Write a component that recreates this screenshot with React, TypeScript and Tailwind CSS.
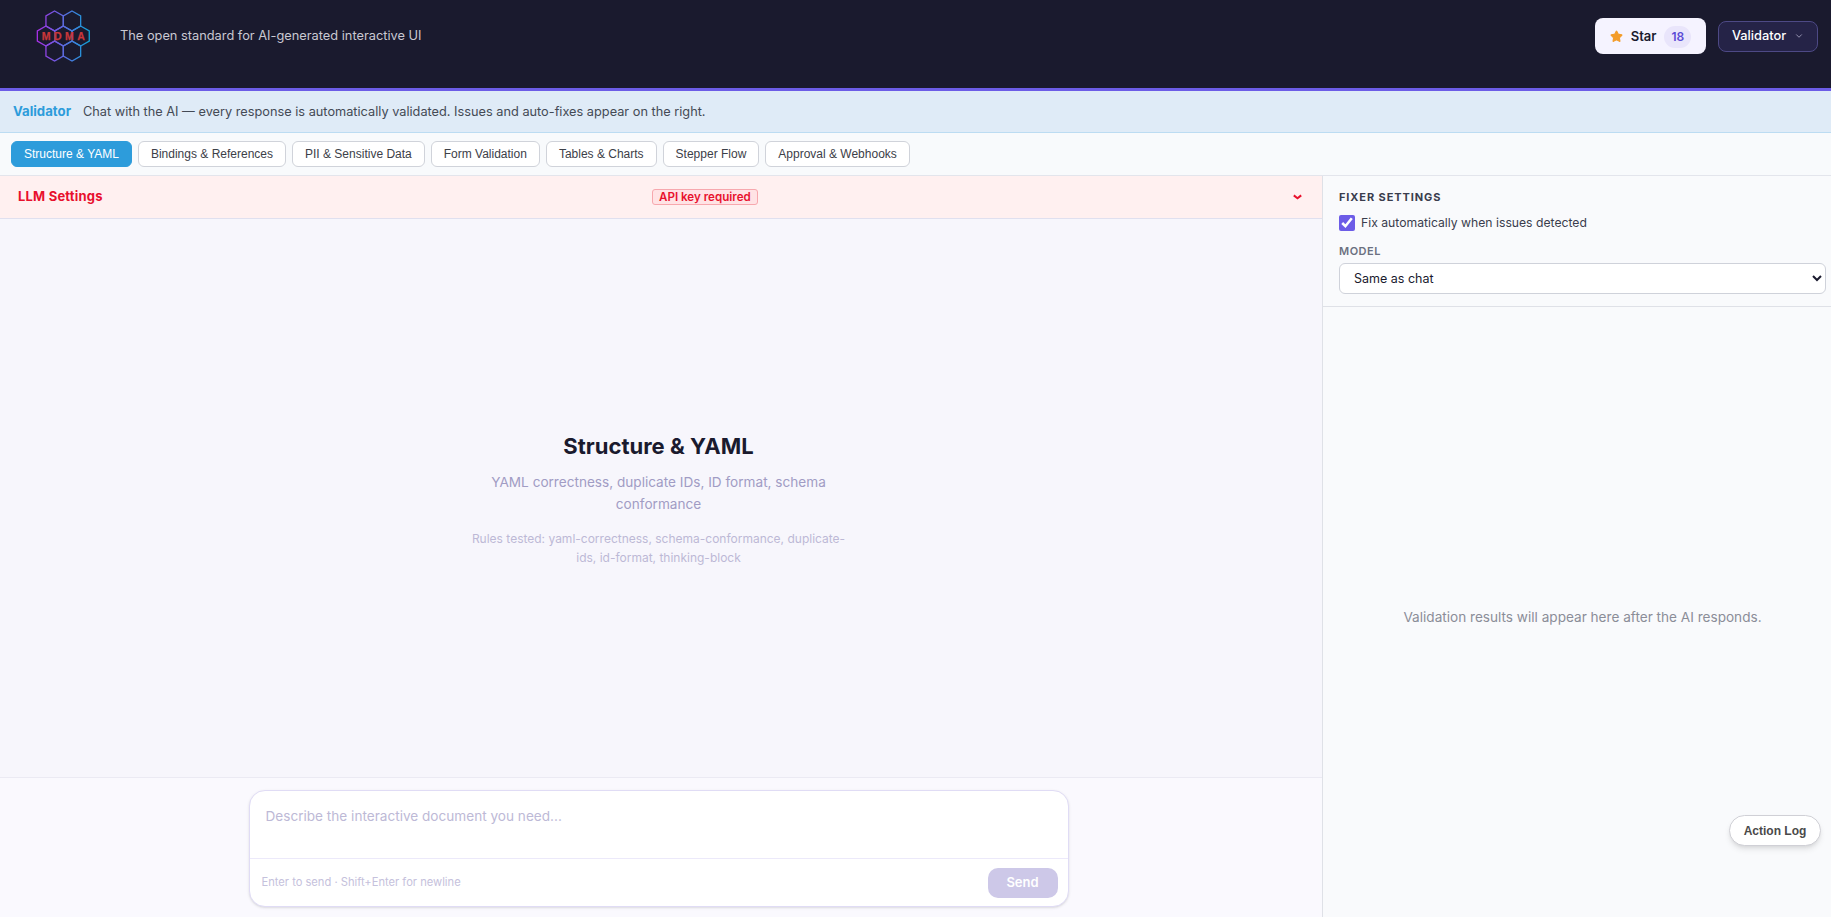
import { Star, ChevronDown } from "lucide-react";

const tabs = [
  "Structure & YAML",
  "Bindings & References",
  "PII & Sensitive Data",
  "Form Validation",
  "Tables & Charts",
  "Stepper Flow",
  "Approval & Webhooks",
];

const hexes = [
  [34.6, 21], [52, 21],
  [26, 36], [43.3, 36], [60.6, 36],
  [34.6, 51], [52, 51],
];

function hexPoints(cx: number, cy: number) {
  const r = 10;
  const w = 8.66;
  return [
    [cx, cy - r], [cx + w, cy - r / 2], [cx + w, cy + r / 2],
    [cx, cy + r], [cx - w, cy + r / 2], [cx - w, cy - r / 2],
  ].map((p) => p.join(",")).join(" ");
}

function Logo() {
  return (
    <svg width="88" height="72" viewBox="0 0 88 72" className="shrink-0">
      <defs>
        <linearGradient id="hexGrad" gradientUnits="userSpaceOnUse" x1="17" y1="36" x2="70" y2="36">
          <stop offset="0" stopColor="#a82fe6" />
          <stop offset="1" stopColor="#0ea5d8" />
        </linearGradient>
      </defs>
      {hexes.map(([x, y], i) => (
        <polygon key={i} points={hexPoints(x, y)} fill="none" stroke="url(#hexGrad)" strokeWidth="1.3" />
      ))}
      <text x="45" y="40" textAnchor="middle" fontSize="10.5" fontWeight="700" fill="#c8373a" stroke="#c8373a" strokeWidth="0.25" letterSpacing="3.5" fontFamily="'Liberation Sans', sans-serif">MDMA</text>
    </svg>
  );
}

export default function App() {
  return (
    <div className="relative h-screen w-full overflow-hidden font-['Inter',sans-serif]">
      <div className="flex h-full w-[1842px] flex-col">
        {/* header */}
        <header className="flex h-[91px] shrink-0 items-center justify-between border-b-[3px] border-[#6c5ce7] bg-[#1a1a2e] pb-4 pl-5 pr-6">
          <div className="flex items-center gap-[12px]">
            <Logo />
            <span className="text-[12.8px] text-[#c9c8d2]">The open standard for AI-generated interactive UI</span>
          </div>
          <div className="flex items-center gap-3">
            <button className="flex h-9 w-[111px] items-center justify-center gap-2 rounded-lg bg-[#f5f3ff] pt-px text-[13px] font-semibold text-[#1a1a2e]">
              <Star size={13} fill="#f39c2b" stroke="#f39c2b" />
              <span>Star</span>
              <span className="rounded-full bg-[#e9e5fb] px-[7px] py-[2px] text-[12px] font-semibold text-[#5b4bd6]">18</span>
            </button>
            <button className="flex h-[31px] w-[100px] items-center justify-center gap-2 rounded-lg border border-[#4d4985] bg-[#252347] text-[12.8px] font-medium text-white">
              Validator
              <ChevronDown size={10} className="text-[#a9a7c4]" />
            </button>
          </div>
        </header>

        {/* banner */}
        <div className="flex h-[42px] shrink-0 items-center gap-[12px] border-b border-[#bcdcf2] bg-[#dfebf7] px-[13px] text-[12.75px]">
          <span className="text-[13.2px] font-bold text-[#2d9cdb]">Validator</span>
          <span className="text-[#444a55]">Chat with the AI — every response is automatically validated. Issues and auto-fixes appear on the right.</span>
        </div>

        {/* tabs */}
        <div className="flex h-[43px] shrink-0 items-center gap-1.5 border-b border-[#e3e5ec] bg-[#f8fafc] px-[11px] font-['Liberation_Sans',sans-serif] text-[12px]">
          {tabs.map((t, i) => (
            <button
              key={t}
              className={
                i === 0
                  ? "h-[26px] rounded-md border border-[#2d9cdb] bg-[#2d9cdb] px-3 text-white"
                  : "h-[26px] rounded-md border border-[#d0d3da] bg-white px-3 text-[#3c4048]"
              }
            >
              {t}
            </button>
          ))}
        </div>

        <div className="flex min-h-0 flex-1">
          {/* left column */}
          <div className="flex w-[1322px] shrink-0 flex-col">
            <div className="flex h-[43px] shrink-0 items-center justify-between border-b border-[#e0e0ef] bg-[#fff0f0] px-[18px]">
              <span className="text-[13px] font-bold tracking-[0.2px] text-[#e8112d]">LLM Settings</span>
              <span className="ml-[14px] rounded-[3px] border border-[#f7a8ae] bg-[#ffe3e5] px-[6px] text-[11.6px] leading-[14px] font-semibold text-[#e8112d]">API key required</span>
              <svg width="9" height="6" viewBox="0 0 9 6" className="mr-[2px] text-[#e8112d]">
                <path d="M0.8 1.4 L4.5 4.3 L8.2 1.4" fill="none" stroke="currentColor" strokeWidth="2" />
              </svg>
            </div>

            <div className="flex flex-1 flex-col items-center justify-center bg-[#f7f6fc] pt-[2px] pr-[5px]">
              <h1 className="text-[22px] leading-[30px] font-bold text-[#1a1a2e]">Structure &amp; YAML</h1>
              <p className="mt-[10px] w-[380px] text-center text-[13.6px] leading-[22px] text-[#a19cc4]">YAML correctness, duplicate IDs, ID format, schema conformance</p>
              <p className="mt-[14px] w-[380px] text-center text-[12px] leading-[19px] text-[#bdb9d6]">Rules tested: yaml-correctness, schema-conformance, duplicate-ids, id-format, thinking-block</p>
            </div>

            <div className="flex h-[140px] shrink-0 justify-center border-t border-[#ebeaf3] bg-[#faf9fe] pt-3 pr-[5px]">
              <div className="flex h-[117px] w-[820px] flex-col rounded-2xl border border-[#e0dcf5] bg-white shadow-sm">
                <div className="flex-1 px-4 pt-[15px] text-[13.6px] text-[#bdb9d6]">Describe the interactive document you need...</div>
                <div className="flex h-[48px] items-center justify-between border-t border-[#ece9fa] pl-3 pr-[10px]">
                  <span className="text-[11.15px] text-[#c5c1dc]">Enter to send · Shift+Enter for newline</span>
                  <button className="h-[30px] w-[70px] rounded-[10px] bg-[#cdc8e8] text-[13px] font-semibold text-white">Send</button>
                </div>
              </div>
            </div>
          </div>

          {/* right column */}
          <div className="flex w-[520px] shrink-0 flex-col border-l border-[#dfe1e7] bg-[#f9fafc]">
            <div className="h-[131px] shrink-0 border-b border-[#dfe1e7] px-4 pt-[14px]">
              <div className="text-[11px] leading-[14px] font-bold tracking-[0.9px] text-[#3a3d4d]">FIXER SETTINGS</div>
              <label className="mt-[10px] flex items-center gap-[6px] text-[12.2px] text-[#3a3d4d]">
                <input type="checkbox" defaultChecked className="m-0 h-4 w-4 accent-[#6c5ce7]" />
                Fix automatically when issues detected
              </label>
              <div className="mt-[12px] text-[11px] leading-[14px] font-semibold tracking-[0.5px] text-[#6b7080]">MODEL</div>
              <select className="mt-[5px] h-[31px] w-full rounded-md border border-[#cfd2da] bg-white px-[10px] text-[12.5px] text-[#1a1a2e]">
                <option>Same as chat</option>
              </select>
            </div>
            <div className="flex flex-1 items-center justify-center pt-[10px] text-[13.6px] text-[#8b8d98]">
              Validation results will appear here after the AI responds.
            </div>
          </div>
        </div>
      </div>

      <button className="absolute right-[10px] bottom-[71px] h-[31px] w-[92px] rounded-full border border-[#d0d0d6] bg-white font-['Liberation_Sans',sans-serif] text-[12px] font-bold text-[#4a4a4a] shadow-md">
        Action Log
      </button>
    </div>
  );
}
